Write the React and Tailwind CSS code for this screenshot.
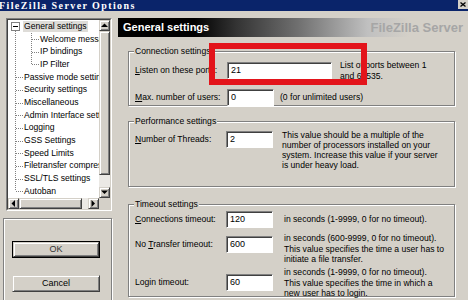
import React from "react";

const raised = "bg-[#d4d0c8] border border-t-[#d4d0c8] border-l-[#d4d0c8] border-r-[#404040] border-b-[#404040] shadow-[inset_1px_1px_0_#fff,inset_-1px_-1px_0_#808080]";

const treeItems = [
  { t: "General settings", lvl: 0, sel: true },
  { t: "Welcome message", lvl: 1 },
  { t: "IP bindings", lvl: 1 },
  { t: "IP Filter", lvl: 1 },
  { t: "Passive mode settings", lvl: 0 },
  { t: "Security settings", lvl: 0 },
  { t: "Miscellaneous", lvl: 0 },
  { t: "Admin Interface settings", lvl: 0 },
  { t: "Logging", lvl: 0 },
  { t: "GSS Settings", lvl: 0 },
  { t: "Speed Limits", lvl: 0 },
  { t: "Filetransfer compression", lvl: 0 },
  { t: "SSL/TLS settings", lvl: 0 },
  { t: "Autoban", lvl: 0 },
];

const ROW = 12.7;

function Arrow({ dir }) {
  // small black triangles for the scroll buttons
  const pts = {
    up: "0,4 3.5,0.5 7,4",
    down: "0,0.5 3.5,4 7,0.5",
    left: "4,0 0.5,3.5 4,7",
    right: "0.5,0 4,3.5 0.5,7",
  }[dir];
  const vert = dir === "up" || dir === "down";
  return (
    <svg width={vert ? 7 : 5} height={vert ? 5 : 7} viewBox={vert ? "0 0 7 5" : "0 0 5 7"}>
      <polygon points={pts} fill="#000" />
    </svg>
  );
}

function TreeLines() {
  const mid = (i) => ROW * i + ROW / 2;
  const tops = [0, 4, 5, 6, 7, 8, 9, 10, 11, 12, 13];
  return (
    <svg className="absolute inset-0" width="91" height="178">
      <g stroke="#808080" strokeWidth="1" strokeDasharray="1 1" shapeRendering="crispEdges">
        <line x1="7.5" y1="11" x2="7.5" y2={mid(13)} />
        {tops.slice(1).map((i) => (
          <line key={i} x1="8" y1={mid(i) + 0.5} x2="15" y2={mid(i) + 0.5} />
        ))}
        <line x1="23.5" y1="11" x2="23.5" y2={mid(3)} />
        {[1, 2, 3].map((i) => (
          <line key={i} x1="24" y1={mid(i) + 0.5} x2="31" y2={mid(i) + 0.5} />
        ))}
      </g>
      <rect x="3.5" y="2.5" width="8" height="8" fill="#fff" stroke="#808080" shapeRendering="crispEdges" />
      <line x1="5" y1="6.5" x2="10" y2="6.5" stroke="#000" shapeRendering="crispEdges" />
    </svg>
  );
}

function Tree() {
  return (
    <div className="ml-[3px] w-[106px] h-[193px] border border-t-[#808080] border-l-[#808080] border-r-white border-b-white">
      <div className="w-full h-full border border-t-[#404040] border-l-[#404040] border-r-[#d4d0c8] border-b-[#d4d0c8] grid grid-cols-[91px_11px] grid-rows-[178px_11px]">
        <div className="relative bg-white overflow-hidden">
          <TreeLines />
          <div className="relative">
            {treeItems.map((it, i) => (
              <div key={i} className={`h-[12.7px] flex items-center whitespace-nowrap ${it.lvl ? "pl-[32px]" : "pl-[16px]"}`}>
                <span className={it.sel ? "bg-[#dedcd8] px-[1px] -ml-[1px] leading-[11px]" : "leading-[11px]"}>{it.t}</span>
              </div>
            ))}
          </div>
        </div>
        <div className="flex flex-col bg-[#ebe9e5]">
          <div className={`h-[11px] flex items-center justify-center ${raised}`}><Arrow dir="up" /></div>
          <div className={`h-[144px] ${raised}`} />
          <div className="flex-1" />
          <div className={`h-[11px] flex items-center justify-center ${raised}`}><Arrow dir="down" /></div>
        </div>
        <div className="flex bg-[#ebe9e5]">
          <div className={`w-[11px] flex items-center justify-center ${raised}`}><Arrow dir="left" /></div>
          <div className={`w-[63px] ${raised}`} />
          <div className="flex-1" />
          <div className={`w-[11px] flex items-center justify-center ${raised}`}><Arrow dir="right" /></div>
        </div>
        <div className="bg-[#d4d0c8]" />
      </div>
    </div>
  );
}

const Input = ({ value, w }) => (
  <div className={`${w} h-[17px] shrink-0 bg-white border border-t-[#808080] border-l-[#808080] border-r-white border-b-white shadow-[inset_1px_1px_0_#404040] pl-[3px] flex items-center text-[9px]`}>
    {value}
  </div>
);

const Group = ({ title, className, children }) => (
  <div className={`relative border border-[#808080] shadow-[inset_1px_1px_0_#fff,1px_1px_0_#fff] ${className}`}>
    <span className="absolute -top-[6px] left-[5px] bg-[#d4d0c8] px-[1px] leading-[10px]">{title}</span>
    {children}
  </div>
);

export default function App() {
  return (
    <div className="relative w-[468px] h-[300px] overflow-hidden bg-[#d4d0c8] font-['Liberation_Sans',Arial,sans-serif] text-[8.6px] text-black">
      {/* title bar */}
      <div className="h-[11px] bg-[#0a246a] flex items-center justify-between overflow-hidden">
        <span className="-ml-[1px] text-white font-bold font-['Liberation_Serif',serif] text-[10px] tracking-[1.4px] leading-[11px]">
          FileZilla Server Options
        </span>
        <div className="w-[10px] h-[9px] mb-[2px] bg-[#d4d0c8] flex items-center justify-center">
          <svg width="6" height="5" viewBox="0 0 6 5">
            <path d="M0.5 0.5 L5.5 4.5 M5.5 0.5 L0.5 4.5" stroke="#000" strokeWidth="1.3" />
          </svg>
        </div>
      </div>

      <div className="flex h-[289px]">
        {/* left column */}
        <div className="w-[113px] pl-[3px] pt-[7px] flex flex-col">
          <Tree />
          <div className="mt-[7px] w-[109px] h-[90px] shrink-0 border border-[#808080] shadow-[inset_1px_1px_0_#fff,1px_1px_0_#fff] pt-[22px] pl-[8px]">
            <div className="w-[88px] h-[17px] border border-black">
              <div className={`w-full h-full flex items-center justify-center text-[9px] text-[#333] ${raised}`}>OK</div>
            </div>
            <div className={`mt-[17px] w-[88px] h-[17px] flex items-center justify-center text-[9px] ${raised}`}>Cancel</div>
          </div>
        </div>

        {/* right column */}
        <div className="ml-[5px] w-[347px] pt-[7px]">
          <div className="h-[19px] flex items-center justify-between pl-[5px] pr-[2px] bg-[linear-gradient(to_right,#000_0%,#000_22%,#333_34%,#707070_52%,#a0a0a0_64%,#c0c0c0_72%,#d4d0c8_84%)]">
            <span className="text-white font-bold text-[11px]">General settings</span>
            <span className="text-[#a6a6a6] font-bold text-[13px] leading-[16px]">FileZilla Server</span>
          </div>

          <div className="ml-[10px] w-[327px] mt-[14px]">
            <Group title="Connection settings" className="h-[55px] pt-[8px] pl-[6px]">
              <div className="flex items-center">
                <span className="w-[92px]"><u>L</u>isten on these ports:</span>
                <Input w="w-[105px]" value="21" />
                <span className="ml-[8px] leading-[10.5px]">List of ports between 1<br />and 65535.</span>
              </div>
              <div className="flex items-center mt-[8px]">
                <span className="w-[92px]"><u>M</u>ax. number of users:</span>
                <Input w="w-[47px]" value="0" />
                <span className="ml-[6px]">(0 for unlimited users)</span>
              </div>
            </Group>

            <Group title="Performance settings" className="mt-[15px] h-[66px] pt-[9px] pl-[6px]">
              <div className="flex items-start">
                <div className="flex items-center">
                  <span className="w-[91px]"><u>N</u>umber of Threads:</span>
                  <Input w="w-[47px]" value="2" />
                </div>
                <span className="ml-[9px] -mt-[1px] leading-[10px] whitespace-nowrap">
                  This value should be a multiple of the<br />
                  number of processors installed on your<br />
                  system. Increase this value if your server<br />
                  is under heavy load.
                </span>
              </div>
            </Group>

            <Group title="Timeout settings" className="mt-[17px] h-[93px] pt-[6px] pl-[6px]">
              <div className="flex items-center">
                <span className="w-[91px]"><u>C</u>onnections timeout:</span>
                <Input w="w-[47px]" value="120" />
                <span className="ml-[11px]">in seconds (1-9999, 0 for no timeout).</span>
              </div>
              <div className="flex items-start mt-[5px]">
                <div className="flex items-center mt-[3px]">
                  <span className="w-[91px]">No <u>T</u>ransfer timeout:</span>
                  <Input w="w-[47px]" value="600" />
                </div>
                <span className="ml-[11px] leading-[10.5px] whitespace-nowrap">
                  in seconds (600-9999, 0 for no timeout).<br />
                  This value specifies the time a user has to<br />
                  initiate a file transfer.
                </span>
              </div>
              <div className="flex items-start mt-[2.5px]">
                <div className="flex items-center mt-[7px]">
                  <span className="w-[91px]">Login timeout:</span>
                  <Input w="w-[47px]" value="60" />
                </div>
                <span className="ml-[11px] leading-[10.5px] whitespace-nowrap">
                  in seconds (1-9999, 0 for no timeout).<br />
                  This value specifies the time in which a<br />
                  new user has to login.
                </span>
              </div>
            </Group>
          </div>
        </div>
      </div>

      {/* red highlight drawn over the port field */}
      <div className="absolute left-[209px] top-[43px] w-[158px] h-[42px] border-[6px] border-[#e3141b]" />
    </div>
  );
}
